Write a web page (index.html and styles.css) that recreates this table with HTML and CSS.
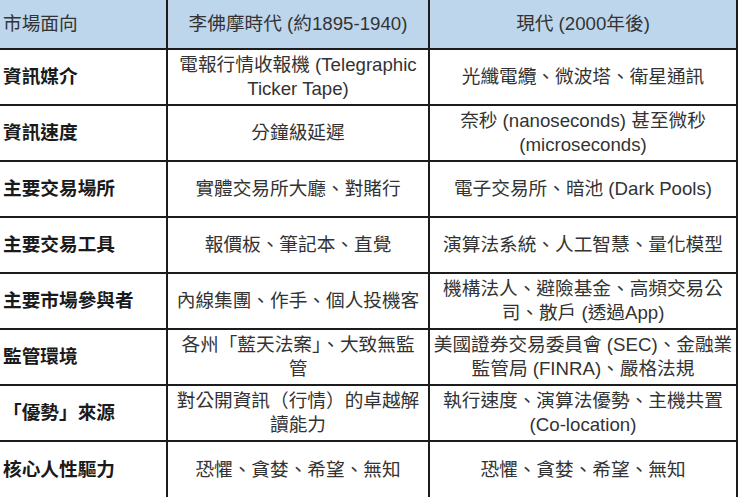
FILE: index.html
```html
<!DOCTYPE html>
<html lang="zh-Hant">
<head>
<meta charset="utf-8">
<link rel="stylesheet" href="styles.css">
</head>
<body>
<table class="cmp">
  <colgroup>
    <col class="c1"><col class="c2"><col class="c3">
  </colgroup>
  <thead>
    <tr class="head">
      <th class="aspect">市場面向</th>
      <th>李佛摩時代 (約1895-1940)</th>
      <th>現代 (2000年後)</th>
    </tr>
  </thead>
  <tbody>
    <tr>
      <td class="aspect">資訊媒介</td>
      <td>電報行情收報機 (Telegraphic<br>Ticker Tape)</td>
      <td>光纖電纜、微波塔、衛星通訊</td>
    </tr>
    <tr>
      <td class="aspect">資訊速度</td>
      <td>分鐘級延遲</td>
      <td>奈秒 (nanoseconds) 甚至微秒<br>(microseconds)</td>
    </tr>
    <tr>
      <td class="aspect">主要交易場所</td>
      <td>實體交易所大廳、對賭行</td>
      <td>電子交易所、暗池 (Dark Pools)</td>
    </tr>
    <tr>
      <td class="aspect">主要交易工具</td>
      <td>報價板、筆記本、直覺</td>
      <td>演算法系統、人工智慧、量化模型</td>
    </tr>
    <tr>
      <td class="aspect">主要市場參與者</td>
      <td>內線集團、作手、個人投機客</td>
      <td>機構法人、避險基金、高頻交易公<br>司、散戶 (透過App)</td>
    </tr>
    <tr>
      <td class="aspect">監管環境</td>
      <td>各州「藍天法案」、大致無監<br>管</td>
      <td>美國證券交易委員會 (SEC)、金融業<br>監管局 (FINRA)、嚴格法規</td>
    </tr>
    <tr>
      <td class="aspect">「優勢」來源</td>
      <td>對公開資訊（行情）的卓越解<br>讀能力</td>
      <td>執行速度、演算法優勢、主機共置<br>(Co-location)</td>
    </tr>
    <tr class="last">
      <td class="aspect">核心人性驅力</td>
      <td>恐懼、貪婪、希望、無知</td>
      <td>恐懼、貪婪、希望、無知</td>
    </tr>
  </tbody>
</table>
</body>
</html>
```

FILE: styles.css
```css
html, body {
  margin: 0;
  padding: 0;
  background: #ffffff;
}

body {
  font-family: "Liberation Sans", "Noto Sans CJK TC", Arial, sans-serif;
  font-size: 18.67px;
  color: #333333;
  overflow: hidden;
}

.cmp {
  border-collapse: collapse;
  table-layout: fixed;
  width: 737px;
}

.c1 { width: 167px; }
.c2 { width: 262px; }
.c3 { width: 308px; }

.cmp th,
.cmp td {
  border: 2px solid #1c1c1c;
  padding: 0 3px;
  line-height: 24px;
  text-align: center;
  vertical-align: middle;
  white-space: nowrap;
  font-weight: normal;
}

.cmp tr > :first-child {
  border-left: none;
}

.cmp thead th {
  border-top: none;
}

.head th {
  background: #bed6ec;
  height: 48px;
  color: #333333;
}

.cmp tbody td {
  height: 54px;
}

.cmp tbody .last td {
  height: 56px;
}

.cmp .aspect {
  text-align: left;
  padding-left: 3px;
}

.cmp tbody .aspect {
  font-weight: bold;
  color: #1a1a1a;
}
```
